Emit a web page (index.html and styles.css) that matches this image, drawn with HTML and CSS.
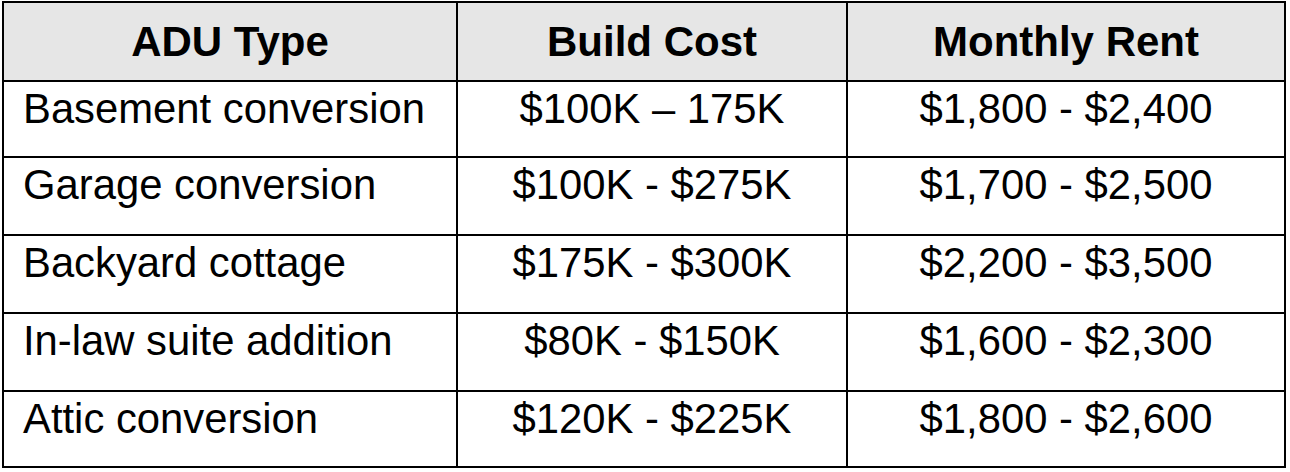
FILE: index.html
```html
<!DOCTYPE html>
<html lang="en">
<head>
<meta charset="utf-8">
<title>ADU Types</title>
<link rel="stylesheet" href="styles.css">
</head>
<body>
<div class="table" role="table">
  <div class="cell head" role="columnheader">ADU Type</div>
  <div class="cell head" role="columnheader">Build Cost</div>
  <div class="cell head" role="columnheader">Monthly Rent</div>

  <div class="cell name">Basement conversion</div>
  <div class="cell num">$100K – 175K</div>
  <div class="cell num">$1,800 - $2,400</div>

  <div class="cell name">Garage conversion</div>
  <div class="cell num">$100K - $275K</div>
  <div class="cell num">$1,700 - $2,500</div>

  <div class="cell name">Backyard cottage</div>
  <div class="cell num">$175K - $300K</div>
  <div class="cell num">$2,200 - $3,500</div>

  <div class="cell name">In-law suite addition</div>
  <div class="cell num">$80K - $150K</div>
  <div class="cell num">$1,600 - $2,300</div>

  <div class="cell name">Attic conversion</div>
  <div class="cell num">$120K - $225K</div>
  <div class="cell num">$1,800 - $2,600</div>
</div>
</body>
</html>
```
FILE: styles.css
```css
html, body {
  margin: 0;
  padding: 0;
  background: #ffffff;
}

body {
  font-family: "Liberation Sans", Arial, sans-serif;
  color: #000000;
}

.table {
  display: grid;
  grid-template-columns: 454px 390px 438px;
  grid-template-rows: 79px 76px 78px 78px 78px 76px;
  width: max-content;
  margin: 1px 0 0 2px;
  border-top: 2px solid #000;
  border-left: 2px solid #000;
}

.cell {
  box-sizing: border-box;
  border-right: 2px solid #000;
  border-bottom: 2px solid #000;
  font-size: 41.8px;
  line-height: 47px;
  white-space: nowrap;
}

.head {
  background: #e6e6e6;
  font-weight: bold;
  font-size: 42px;
  display: flex;
  align-items: center;
  justify-content: center;
}

.name {
  padding: 3px 0 0 19px;
}

.num {
  padding-top: 3px;
  text-align: center;
}
```
